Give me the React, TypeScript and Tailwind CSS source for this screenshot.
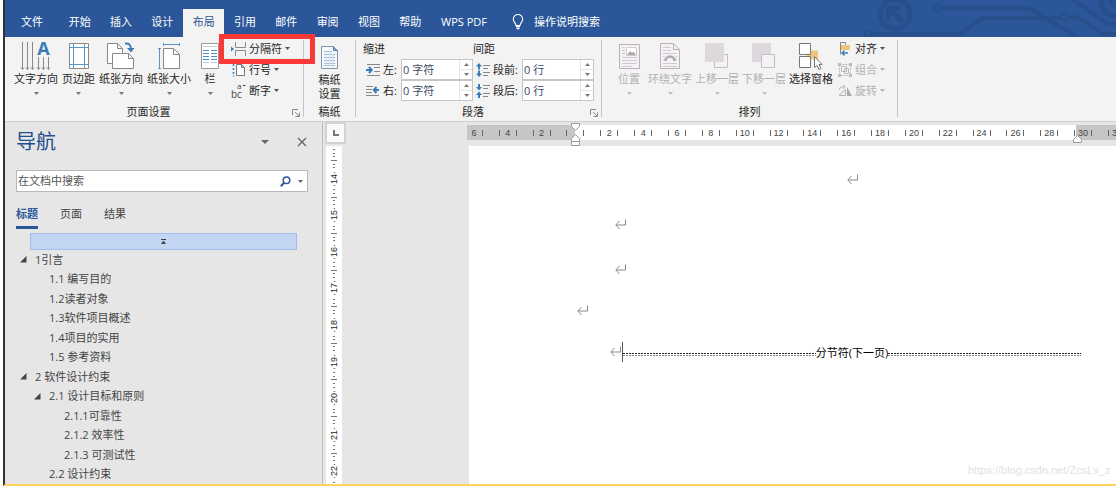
import React from "react";
import clsx from "clsx";

const TABS = ["开始", "插入", "设计", "布局", "引用", "邮件", "审阅", "视图", "帮助"];

const OUTLINE = [
  { level: 1, text: "1引言", open: true },
  { level: 2, text: "1.1 编写目的" },
  { level: 2, text: "1.2读者对象" },
  { level: 2, text: "1.3软件项目概述" },
  { level: 2, text: "1.4项目的实用" },
  { level: 2, text: "1.5 参考资料" },
  { level: 1, text: "2 软件设计约束", open: true },
  { level: 2, text: "2.1 设计目标和原则", open: true },
  { level: 3, text: "2.1.1可靠性" },
  { level: 3, text: "2.1.2 效率性" },
  { level: 3, text: "2.1.3 可测试性" },
  { level: 2, text: "2.2 设计约束" },
];

const H_RULER = ["6", "4", "2", "", "2", "4", "6", "8", "10", "12", "14", "16", "18", "20", "22", "24", "26", "28", "30", "32"];
const V_RULER = ["14", "15", "16", "17", "18", "19", "20", "21", "22"];

export default function App() {
  return (
    <div className="bg-white pl-[3px] font-['Open_Sans','Noto_Sans_CJK_SC',sans-serif] text-[11px] leading-4 text-[#262626]">
      <div className="overflow-hidden border-b-2 border-l-2 border-b-[#ffd35c] border-l-[#333333] bg-[#e6e6e6]">
        <TabBar />
        <Ribbon />
        <main className="flex">
          <NavigationPane />
          <VerticalRuler />
          <DocumentArea />
        </main>
      </div>
    </div>
  );
}

/* ---------- title tabs ---------- */

function TabBar() {
  return (
    <header className="relative flex h-[37px] items-end bg-[#2b579a] text-white">
      <Circuit />
      <button className="h-7 w-[54px] pb-0.5">文件</button>
      <nav className="flex w-[372px]">
        {TABS.map((tab) => (
          <button key={tab} className={clsx("h-7 flex-1 pb-0.5", tab === "布局" && "bg-[#f3f3f3] text-[#2b579a]")}>
            {tab}
          </button>
        ))}
      </nav>
      <button className="h-7 w-[66px] pb-0.5">WPS PDF</button>
      <button className="ml-[15px] flex h-7 items-center gap-[10px] pb-0.5">
        <svg width="12" height="16" viewBox="0 0 12 16" fill="none" stroke="#fff">
          <path d="M4 11.5C4 9 1.3 8.2 1.3 5.2a4.7 4.7 0 0 1 9.4 0C10.700 8.200 8 9 8 11.500z" strokeWidth="1.1" />
          <path d="M4 12.500h4M4.500 14.500h3" strokeWidth="1.3" />
        </svg>
        操作说明搜索
      </button>
    </header>
  );
}

const Circuit = () => (
  <svg className="absolute right-0 top-0" width="256" height="37" viewBox="860 0 256 37" fill="none" stroke="#264f8c" strokeWidth="4">
    <circle cx="895" cy="14" r="15" strokeWidth="5" />
    <path d="M903 22 889 8M888.500 20V8H901" strokeWidth="5" />
    <circle cx="868" cy="34" r="3" strokeWidth="2" />
    <path d="M872 34h89l21-16h78" />
    <circle cx="937" cy="8" r="3.500" strokeWidth="2.500" />
    <path d="M941 8h84c6 0 10 3 14 6l38 23" />
    <circle cx="1064" cy="17" r="3.500" strokeWidth="2.500" />
    <path d="M1068 17h6c4 0 7 2 10 4l18 13h14M1072-1l36 25h8" />
    <circle cx="1118" cy="0" r="17" strokeWidth="5" />
    <path d="M1109 0l8 8" />
  </svg>
);

/* ---------- ribbon ---------- */

function Ribbon() {
  return (
    <section className="flex h-[85px] border-b border-[#d0d0d0] bg-[#f3f3f3] pt-px">
      <Group label="页面设置" launcher className="w-[298px] pl-[9px]">
        <div className="flex gap-1">
          <BigButton label="文字方向" icon={<TextDirectionIcon />} />
          <BigButton label="页边距" icon={<MarginsIcon />} />
          <BigButton label="纸张方向" icon={<OrientationIcon />} />
          <BigButton label="纸张大小" icon={<SizeIcon />} />
          <BigButton label="栏" icon={<ColumnsIcon />} className="w-[30px]" />
        </div>
        <div className="ml-1.5">
          <div className="relative">
            <SmallButton label="分隔符" icon={<BreaksIcon />} />
            <div className="pointer-events-none absolute -left-3 -top-1 z-10 h-[30px] w-24 border-[5px] border-[#fb3838]" />
          </div>
          <SmallButton label="行号" icon={<LineNumbersIcon />} />
          <SmallButton label="断字" icon={<HyphenationIcon />} />
        </div>
      </Group>
      <Separator />
      <Group label="稿纸" className="w-[51px] justify-center">
        <button className="flex flex-col items-center leading-[14px]">
          <span className="flex h-[35px] items-end pb-1">
            <GridPaperIcon />
          </span>
          <span>稿纸</span>
          <span>设置</span>
        </button>
      </Group>
      <Separator />
      <Group label="段落" launcher className="w-[245px] pl-[7px]">
        <div>
          <h3 className="h-[21px] leading-[21px]">缩进</h3>
          <SpinField id="indent-left" label="左:" value="0 字符" labelClass="w-[18px]" icon={<IndentIcon />} />
          <SpinField id="indent-right" label="右:" value="0 字符" labelClass="w-[18px]" icon={<IndentIcon right />} />
        </div>
        <div>
          <h3 className="h-[21px] leading-[21px]">间距</h3>
          <SpinField id="space-before" label="段前:" value="0 行" labelClass="w-[29px]" icon={<SpacingIcon />} />
          <SpinField id="space-after" label="段后:" value="0 行" labelClass="w-[29px]" icon={<SpacingIcon after />} />
        </div>
      </Group>
      <Separator />
      <Group label="排列" className="w-[295px] pl-[11px]">
        <div className="flex gap-[3px]">
          <BigButton label="位置" icon={<PositionIcon />} className="w-8" disabled />
          <BigButton label="环绕文字" icon={<WrapIcon />} disabled />
          <BigButton label="上移一层" icon={<ForwardIcon />} disabled />
          <BigButton label="下移一层" icon={<BackwardIcon />} disabled />
          <BigButton label="选择窗格" icon={<SelectionPaneIcon />} noArrow />
        </div>
        <div className="ml-[5px]">
          <SmallButton label="对齐" icon={<AlignIcon />} />
          <SmallButton label="组合" icon={<GroupIcon />} disabled />
          <SmallButton label="旋转" icon={<RotateIcon />} disabled />
        </div>
      </Group>
      <Separator />
    </section>
  );
}

type GroupProps = { label: string; launcher?: boolean; className?: string; children: React.ReactNode };

const Group = ({ label, launcher, className, children }: GroupProps) => (
  <div className="flex shrink-0 flex-col">
    <div className={clsx("flex h-[66px]", className)}>{children}</div>
    <div className="flex h-4 items-center">
      <span className="flex-1 text-center">{label}</span>
      {launcher && (
        <button aria-label={`${label}对话框`} className="mr-[3px] mt-0.5">
          <svg width="8" height="8" viewBox="0 0 8 8" fill="none" stroke="#888">
            <path d="M.5 6V.5H6M3 3l4 4M7.500 3.500v4h-4" />
          </svg>
        </button>
      )}
    </div>
  </div>
);

const Separator = () => <div className="mb-1 mt-0.5 w-px shrink-0 bg-[#c4c4c4]" />;

const Caret = ({ className }: { className?: string }) => (
  <svg className={className} width="5" height="3" viewBox="0 0 5 3" fill="currentColor">
    <path d="M0 0h5L2.500 3z" />
  </svg>
);

type ButtonProps = {
  label: string;
  icon: React.ReactNode;
  className?: string;
  disabled?: boolean;
  noArrow?: boolean;
};

const BigButton = ({ label, icon, className, disabled, noArrow }: ButtonProps) => (
  <button disabled={disabled} className={clsx("flex flex-col items-center pt-[3px]", disabled && "text-[#b1b1b1]", className)}>
    <span className="flex h-[30px] items-center">{icon}</span>
    <span className="whitespace-nowrap">{label}</span>
    <span className="flex h-3 items-center">{!noArrow && <Caret className={disabled ? "text-[#c0c0c0]" : "text-[#777]"} />}</span>
  </button>
);

const SmallButton = ({ label, icon, disabled }: ButtonProps) => (
  <button disabled={disabled} className={clsx("flex h-[21px] items-center gap-[3px]", disabled && "text-[#b1b1b1]")}>
    {icon}
    <span className="whitespace-nowrap">{label}</span>
    <Caret className={disabled ? "text-[#b1b1b1]" : "text-[#555]"} />
  </button>
);

type SpinProps = { id: string; label: string; value: string; labelClass: string; icon: React.ReactNode };

const SpinField = ({ id, label, value, labelClass, icon }: SpinProps) => (
  <div className="flex h-[21px] items-center pl-[3px]">
    {icon}
    <label htmlFor={id} className={clsx("ml-[3px] whitespace-nowrap", labelClass)}>
      {label}
    </label>
    <div className="flex h-[21px] w-[72px] border border-[#c6c6c6] bg-white">
      <input id={id} defaultValue={value} className="w-[57px] pl-px text-[#3b4a63] outline-none" />
      <div className="flex flex-1 flex-col border-l border-[#e6e6e6] text-[#777]">
        <button aria-label={`${label}增加`} className="flex flex-1 items-center justify-center border-b border-[#e6e6e6]">
          <Caret className="rotate-180" />
        </button>
        <button aria-label={`${label}减少`} className="flex flex-1 items-center justify-center">
          <Caret />
        </button>
      </div>
    </div>
  </div>
);

/* ---------- navigation pane ---------- */

function NavigationPane() {
  return (
    <aside className="w-[318px] shrink-0 border-r border-[#bdbdbd] text-[#444]">
      <div className="flex h-12 items-center pb-2 pl-[11px] pr-[15px]">
        <h2 className="flex-1 text-xl text-[#1f4e8c]">导航</h2>
        <button aria-label="任务窗格选项">
          <svg width="8" height="4" viewBox="0 0 8 4" fill="#666">
            <path d="M0 0h8L4 4z" />
          </svg>
        </button>
        <button aria-label="关闭" className="ml-7">
          <svg width="10" height="10" viewBox="0 0 10 10" stroke="#666" strokeWidth="1.300">
            <path d="M1 1l8 8M9 1 1 9" />
          </svg>
        </button>
      </div>
      <div className="ml-[11px] mr-[14px] flex h-[22px] items-center border border-[#b8b8b8] bg-white">
        <input aria-label="在文档中搜索" placeholder="在文档中搜索" className="min-w-0 flex-1 pl-px outline-none placeholder:text-[#555]" />
        <button aria-label="搜索">
          <svg width="11" height="11" viewBox="0 0 11 11" fill="none" stroke="#2b579a">
            <circle cx="6.500" cy="4.300" r="3.300" strokeWidth="1.500" />
            <path d="M4.200 6.700.8 10.200" strokeWidth="2" />
          </svg>
        </button>
        <button aria-label="搜索选项" className="ml-[7px] mr-1 text-[#666]">
          <Caret />
        </button>
      </div>
      <div className="flex gap-[22px] pl-[11px] pt-[13px]">
        <button className="h-6 border-b-[3px] border-[#2b579a] pb-[3px] font-bold text-[#2b579a]">标题</button>
        <button className="h-6 border-b-[3px] border-transparent pb-[3px]">页面</button>
        <button className="h-6 border-b-[3px] border-transparent pb-[3px]">结果</button>
      </div>
      <div className="ml-[25px] mr-[25px] mt-1 flex h-[17px] items-center justify-center border border-[#a3bde8] bg-[#c2d5f2]">
        <svg width="5" height="5" viewBox="0 0 5 5" fill="#444">
          <path d="M0 0h5v1H0zM2.500 1.500 5 5H0z" />
        </svg>
      </div>
      <ul className="flex h-[234px] flex-col">
        {OUTLINE.map((item) => (
          <li
            key={item.text}
            className={clsx(
              "flex flex-1 items-center",
              item.level === 1 && "pl-[15px]",
              item.level === 2 && "pl-[29px]",
              item.level === 3 && "pl-[44px]",
            )}
          >
            <span className="w-[15px] shrink-0">
              {item.open && (
                <svg width="7" height="7" viewBox="0 0 7 7" fill="#444">
                  <path d="M6.500 0v6.500H0z" />
                </svg>
              )}
            </span>
            <a href="#page" className="whitespace-nowrap">
              {item.text}
            </a>
          </li>
        ))}
      </ul>
    </aside>
  );
}

/* ---------- rulers and page ---------- */

function VerticalRuler() {
  return (
    <div className="flex w-6 shrink-0 flex-col pl-0.5">
      <button aria-label="制表符" className="flex h-[22px] w-[21px] items-center justify-center border-2 border-[#d2d2d2] bg-[#fafafa]">
        <svg width="6" height="6" viewBox="0 0 6 6" fill="none" stroke="#777" strokeWidth="2">
          <path d="M1 0v5h5" />
        </svg>
      </button>
      {/* ticks run from one half-mark to the next, with the number between */}
      <div className="relative ml-px mt-0.5 w-4 flex-1 overflow-hidden bg-white">
        <div className="absolute inset-x-0 top-0 flex h-[343px] flex-col font-['Liberation_Sans',sans-serif] text-[9px] leading-[10px]">
          <div className="flex h-[14px] flex-col items-center justify-evenly">
            <Tick />
            <Tick />
            <Tick />
          </div>
          {V_RULER.map((n) => (
            <div key={n} className="flex flex-1 flex-col items-center justify-between">
              <span className="h-px w-1.5 bg-[#777]" />
              <Tick />
              <Tick />
              <span className="flex items-center [writing-mode:vertical-rl]">
                <span className="rotate-180">·{n}·</span>
              </span>
              <Tick />
              <Tick />
              <span />
            </div>
          ))}
        </div>
      </div>
    </div>
  );
}

const Tick = () => <span className="h-px w-0.5 bg-[#777]" />;

function DocumentArea() {
  return (
    <div className="flex min-w-0 flex-1 flex-col pl-[120px] pt-[3px]">
      <div className="relative h-[15px]">
        <div className="h-full overflow-hidden bg-[linear-gradient(to_right,#c6c6c6_108px,#fff_108px,#fff_609px,#c6c6c6_609px)]">
          <div className="-ml-[10px] flex h-full w-[677px] font-['Liberation_Sans',sans-serif] text-[9px] text-[#444]">
            {H_RULER.map((n, i) => (
              <div key={i} className="flex flex-1 items-center justify-center">
                <span className="h-1.5 w-[18px] border-x border-[#666] text-center leading-[6px]">{n}</span>
              </div>
            ))}
          </div>
        </div>
        <svg className="absolute -top-0.5 left-[104px]" width="9" height="24" viewBox="0 0 9 24" fill="#fff" stroke="#999">
          <path d="M.5.500h8v3l-4 4-4-4zM.5 18.500v-3l4-4 4 4v3zM.5 18.500h8v4h-8z" />
        </svg>
        <svg className="absolute left-[606px] top-2.5" width="9" height="9" viewBox="0 0 9 9" fill="#fff" stroke="#999">
          <path d="M.5 7.500v-3l4-4 4 4v3z" />
        </svg>
      </div>
      <article id="page" className="relative ml-0.5 mt-1.5 flex-1 overflow-hidden bg-white pt-[11px]">
        <p className="flex h-[45px] items-center pl-[378px]"><ReturnMark /></p>
        <p className="flex h-[45px] items-center pl-[146px]"><ReturnMark /></p>
        <p className="flex h-[45px] items-center pl-[146px]"><ReturnMark /></p>
        <p className="flex h-[37px] items-center pl-[108px]"><ReturnMark /></p>
        <div className="flex h-[45px] items-center pl-[141px]">
          <ReturnMark />
          <span className="h-5 w-px bg-[#555]" />
          <div className="flex w-[458px] items-center pt-0.5 text-black">
            <DottedRule />
            <span className="whitespace-nowrap">分节符(下一页)</span>
            <DottedRule />
          </div>
        </div>
        <span className="absolute bottom-1.5 left-[499px] whitespace-nowrap font-['Liberation_Sans',sans-serif] text-[11px] text-[#e2e2e2]">
          https://blog.csdn.net/ZcsLv_z
        </span>
      </article>
    </div>
  );
}

const DottedRule = () => (
  <span className="mt-[3px] flex flex-1 flex-col gap-px">
    <span className="h-px bg-[repeating-linear-gradient(to_right,#222_0,#222_2px,transparent_2px,transparent_3px)]" />
    <span className="h-px bg-[repeating-linear-gradient(to_right,#888_0,#888_2px,transparent_2px,transparent_3px)]" />
  </span>
);

const ReturnMark = () => (
  <svg width="12" height="11" viewBox="0 0 12 11" fill="none" stroke="#888">
    <path d="M10.500.5v5.500H1M4.500 2 .8 6l3.700 4" />
  </svg>
);

/* ---------- ribbon icons ---------- */

const TextDirectionIcon = () => (
  <svg className="overflow-visible" width="30" height="30" viewBox="0 0 30 30" fill="none" stroke="#888">
    <path d="M1.500 1v27M6.500 1v27M11.500 1v27M17.500 16v12M22.500 16v12M27.500 16v12" />
    <path d="M0 26.500l1.500 2 1.500-2M5 26.500l1.500 2 1.500-2M10 26.500l1.500 2 1.500-2M16 26.500l1.500 2 1.500-2M21 26.500l1.500 2 1.500-2M26 26.500l1.500 2 1.500-2" />
    <text x="22.500" y="14" textAnchor="middle" fontSize="18" fontWeight="700" fill="#3b7cb8" stroke="none">A</text>
  </svg>
);

const MarginsIcon = () => (
  <svg width="20" height="26" viewBox="0 0 20 26" fill="none">
    <path d="M.5.500h19v25H.5z" fill="#fff" stroke="#888" />
    <path d="M4.500 1v24M15.500 1v24M1 4.500h18M1 21.500h18" stroke="#5b94c8" />
  </svg>
);

const OrientationIcon = () => (
  <svg width="28" height="28" viewBox="0 0 28 28" fill="#fff" stroke="#888">
    <path d="M.5 1.500h10l5 5v15H.5z" />
    <path d="M10.500 1.500v5h5" fill="none" />
    <path d="M5.500 11.500h16l5 5v10h-21z" />
    <path d="M21.500 11.500v5h5" fill="none" />
    <path d="M18 1.500c4-.5 6 1.500 6 6" fill="none" stroke="#3b7cb8" strokeWidth="2" />
    <path d="M20 6h7.500L24 10.500z" fill="#3b7cb8" stroke="none" />
  </svg>
);

const SizeIcon = () => (
  <svg width="23" height="28" viewBox="0 0 23 28" fill="none">
    <path d="M5.500 6.500h10l6 6v14h-16z" fill="#fff" stroke="#888" />
    <path d="M15.500 6.500v6h6" stroke="#888" />
    <path d="M5.500 2.500h16M5.500 1v3M21.500 1v3M1.500 6.500v20M0 6.500h3M0 26.500h3" stroke="#5b94c8" />
  </svg>
);

const ColumnsIcon = () => (
  <svg width="18" height="26" viewBox="0 0 18 26" fill="none">
    <path d="M.5.500h17v25H.5z" fill="#fff" stroke="#999" />
    <path d="M2 3.500h14" stroke="#ccc" />
    <path d="M2 7.500h6M10 7.500h6M2 10.500h6M10 10.500h6M2 13.500h6M10 13.500h6M2 16.500h6M10 16.500h6" stroke="#4f8bc4" />
    <path d="M2 19.500h6M10 19.500h6" stroke="#b5cbe2" />
  </svg>
);

const BreaksIcon = () => (
  <svg width="15" height="14" viewBox="0 0 15 14" fill="none" stroke="#888">
    <path d="M4.500 0v5.500h10V0M4.500 14V8.500h10V14" />
    <path d="M0 4.500 3 7 0 9.500z" fill="#3b7cb8" stroke="none" />
  </svg>
);

const LineNumbersIcon = () => (
  <svg width="15" height="14" viewBox="0 0 15 14" fill="none" stroke="#777">
    <path d="M5.500 1.500h5l3 3v8h-8zM10.500 1.500v3h3" fill="#fff" />
    <path d="M2.500 1v2M2.500 5v2M2.500 9v2M2.500 12.500v1" stroke="#3b7cb8" strokeWidth="1.500" />
  </svg>
);

const HyphenationIcon = () => (
  <svg className="overflow-visible" width="15" height="16" viewBox="0 0 15 16" fill="#444">
    <text x="0" y="15" fontSize="10">bc</text>
    <text x="6" y="6" fontSize="8">a</text>
    <path d="M12 2h2.500v1H12z" />
  </svg>
);

const GridPaperIcon = () => (
  <svg width="17" height="23" viewBox="0 0 17 23" fill="none">
    <path d="M.5.500h12l4 4v18H.5z" fill="#f4f8fc" stroke="#8494a8" />
    <path d="M12.500.500v4h4" fill="#7c9bbf" stroke="#5f7d9f" />
    <path d="M3 5.500h8M3 8.500h11M3 11.500h11M3 14.500h11M3 17.500h11M3 19.500h11" stroke="#9db8d6" />
    <path d="M5.500 5v15M8.500 5v15M11.500 8v12" stroke="#d3e0ee" />
  </svg>
);

const IndentIcon = ({ right }: { right?: boolean }) => (
  <svg width="14" height="12" viewBox="0 0 14 12" fill="none" stroke="#888">
    {right ? (
      <>
        <path d="M0 1.500h7M0 4.500h6M0 7.500h6M0 10.500h13" />
        <path d="M13 5H8M10.500 2 7.800 5l2.700 3" stroke="#3b7cb8" strokeWidth="2" />
      </>
    ) : (
      <>
        <path d="M1 .500h13M8 3.500h6M8 7.500h6M1 11.500h13" />
        <path d="M0 6h5M3 3 5.700 6 3 9" stroke="#3b7cb8" strokeWidth="2" />
      </>
    )}
  </svg>
);

const SpacingIcon = ({ after }: { after?: boolean }) => (
  <svg width="14" height="14" viewBox="0 0 14 14" fill="none">
    <path d={after ? "M7 1.500h7M7 4.500h5M7 9.500h7M7 12.500h5" : "M7 2.500h7M7 5.500h5M7 9.500h7M7 12.500h5"} stroke="#888" />
    <path
      d={after ? "M2 0h2v3h2l-3 3.500L0 3h2zM2 14h2v-3h2L3 7.500 0 11h2z" : "M2 6.500h2V3.500h2L3 0 0 3.500h2zM2 7.500h2v3h2L3 14 0 10.500h2z"}
      fill="#3b7cb8"
    />
  </svg>
);

const PositionIcon = () => (
  <svg width="21" height="25" viewBox="0 0 21 25" fill="none" stroke="#d0c9d0">
    <path d="M.5.500h20v24H.5z" fill="#f6f1f6" stroke="#b8b1b8" />
    <path d="M3 3.500h3M3 6.500h3M3 9.500h3M3 13.500h15M3 16.500h15M3 19.500h15M3 22.500h10" />
    <path d="M7.500 3.500h10v8h-10z" fill="#fff" />
    <path d="M8 11l3-4 2 2 1.500-1.500L17 11z" fill="#aaa" stroke="none" />
  </svg>
);

const WrapIcon = () => (
  <svg width="21" height="26" viewBox="0 0 21 26" fill="none" stroke="#d0c9d0">
    <path d="M.5.500h13l6 6v19H.5z" fill="#f6f1f6" stroke="#b8b1b8" />
    <path d="M13.500.500v6h6" stroke="#b8b1b8" />
    <path d="M3 4.500h8M3 7.500h8M3 10.500h14M3 13.500h2M15 13.500h2M3 16.500h2M15 16.500h2M3 20.500h14M3 23.500h14" />
    <path d="M5.500 18a4.500 4.500 0 0 1 9 0" stroke="#aaa" strokeWidth="2.500" />
  </svg>
);

const ForwardIcon = () => (
  <svg width="24" height="26" viewBox="0 0 24 26">
    <path d="M9.500 11.500h13v13h-13z" fill="#f6f1f6" stroke="#c3bcc3" />
    <path d="M0 0h19v19H0z" fill="#dcd8dc" />
  </svg>
);

const BackwardIcon = () => (
  <svg width="24" height="26" viewBox="0 0 24 26">
    <path d="M0 0h19v19H0z" fill="#dcd8dc" />
    <path d="M9.500 11.500h13v13h-13z" fill="#f6f1f6" stroke="#c3bcc3" />
  </svg>
);

const SelectionPaneIcon = () => (
  <svg width="24" height="27" viewBox="0 0 24 27">
    <path d="M8 7.500h11v9H8z" fill="#f0c57d" />
    <path d="M.5.500h11v11H.5zM.5 13.500h11v11H.5z" fill="#fff" stroke="#777" />
    <path d="M15.500 13.500v11l2.500-2 2 4 2-1-2-4h3z" fill="#fff" stroke="#777" />
  </svg>
);

const AlignIcon = () => (
  <svg width="14" height="15" viewBox="0 0 14 15" fill="none">
    <path d="M2.500 1.500h5v3h-5zM2.500 1.500v12" stroke="#888" />
    <path d="M3 4h9v5H3z" fill="#f0c57d" />
    <path d="M10 12H4M6.500 9.500 4 12l2.500 2.500" stroke="#3b7cb8" strokeWidth="1.400" />
  </svg>
);

const GroupIcon = () => (
  <svg width="14" height="14" viewBox="0 0 14 14" fill="none" stroke="#bbb">
    <path d="M1.500 1.500h11v11h-11z" strokeDasharray="2 1" />
    <path d="M3.500 3.500h5v5h-5zM6.500 5.500h4v5h-4z" />
    <path d="M0 0h3v3H0zM11 0h3v3h-3zM0 11h3v3H0zM11 11h3v3h-3z" fill="#bbb" stroke="none" />
  </svg>
);

const RotateIcon = () => (
  <svg width="14" height="12" viewBox="0 0 14 12" fill="none" stroke="#b5b5b5">
    <path d="M1 10.500h6.500v-6z" />
    <path d="M9 2v9h5z" fill="#aaa" stroke="none" />
    <path d="M1.500 4.500c0-2 2-3 4.500-2.500M5 0l2 2-2 2" />
  </svg>
);
